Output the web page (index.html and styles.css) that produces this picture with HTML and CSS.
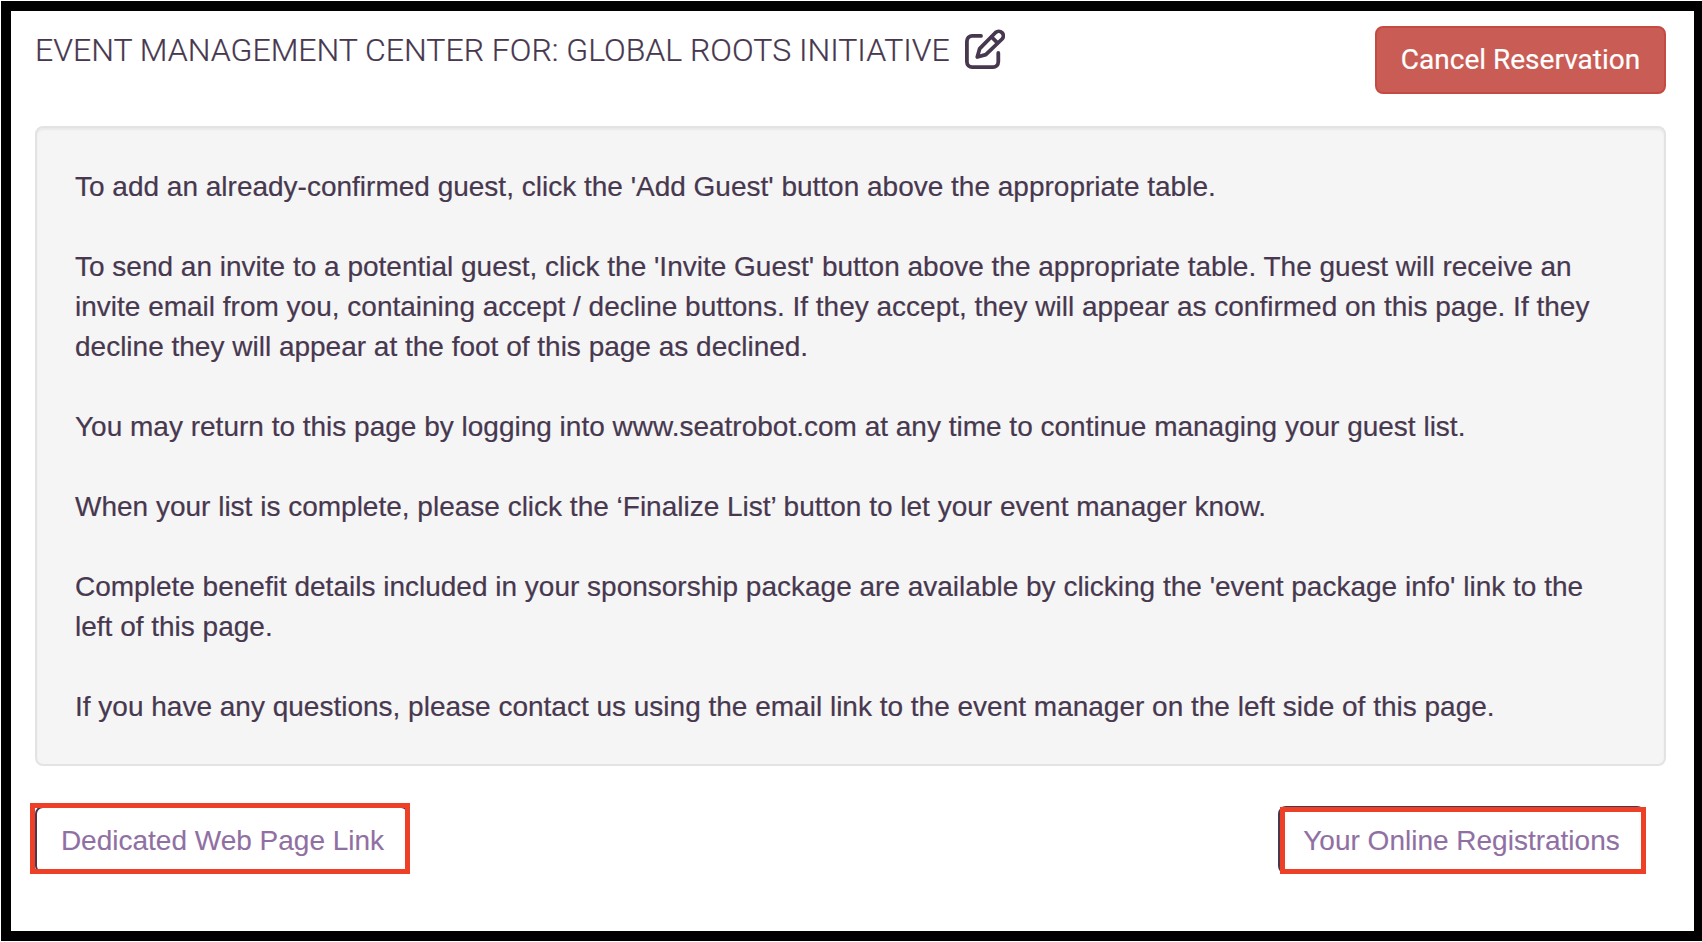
FILE: index.html
```html
<!DOCTYPE html>
<html lang="en">
  <head>
    <meta charset="UTF-8" />
    <meta name="viewport" content="width=device-width, initial-scale=1.0" />
    <title>Event Management Center</title>
    <link rel="stylesheet" href="styles.css">
  </head>
  <body>
    <div class="container">
      <!-- Page heading and cancel button -->
      <div class="header">
        <h2 class="title">
          <span class="title-text">EVENT MANAGEMENT CENTER FOR: GLOBAL ROOTS INITIATIVE</span>
          <svg class="edit-icon" viewBox="0 0 40 40" fill="none" stroke="currentColor" stroke-width="3.8" stroke-linecap="round" stroke-linejoin="round">
            <path d="M16 6.9H7.2A5.3 5.3 0 0 0 1.9 12.2V32.8A5.3 5.3 0 0 0 7.2 38.1H28A5.3 5.3 0 0 0 33.3 32.8V24" />
            <path d="M12.3 28L14.7 19.6L30.6 3.5A4.6 4.6 0 0 1 37.1 10L20.8 25.6Z" />
            <path d="M26.6 8L32.2 13.6" />
          </svg>
        </h2>
        <button type="button" class="btn-cancel">Cancel Reservation</button>
      </div>

      <!-- Instructions -->
      <div class="well">
        <p>To add an already-confirmed guest, click the 'Add Guest' button above the appropriate table.</p>
        <p>To send an invite to a potential guest, click the 'Invite Guest' button above the appropriate table. The guest will receive an invite email from you, containing accept / decline buttons. If they accept, they will appear as confirmed on this page. If they decline they will appear at the foot of this page as declined.</p>
        <p>You may return to this page by logging into www.seatrobot.com at any time to continue managing your guest list.</p>
        <p>When your list is complete, please click the ‘Finalize List’ button to let your event manager know.</p>
        <p>Complete benefit details included in your sponsorship package are available by clicking the 'event package info' link to the left of this page.</p>
        <p>If you have any questions, please contact us using the email link to the event manager on the left side of this page.</p>
      </div>

      <!-- Bottom links -->
      <div class="links">
        <a class="btn-link btn-page">Dedicated Web Page Link</a>
        <a class="btn-link btn-registrations">Your Online Registrations</a>
      </div>
    </div>
  </body>
</html>
```

FILE: styles.css
```css
* {
  box-sizing: border-box;
}

body {
  margin: 0;
  padding: 1px 0 1px 1px;
  height: 942px;
  overflow: hidden;
  background: white;
  color: #47384f;
  font-family: "Liberation Sans", Arial, sans-serif;
  font-size: 28px;
}

/* Black frame around the whole page */
.container {
  height: 940px;
  padding: 15px 28px 0 24px;
  border: 10px solid black;
  border-right-width: 8px;
}

.header {
  display: flex;
  justify-content: space-between;
  align-items: flex-start;
  height: 100px;
}

.title {
  display: flex;
  align-items: flex-start;
  gap: 15px;
  margin: 3px 0 0;
  font-family: Roboto, sans-serif;
  font-size: 32px;
  font-weight: 300;
  line-height: 40px;
  white-space: nowrap;
}

.title-text {
  padding-top: 1px;
  -webkit-text-stroke: 0.2px;
}

.edit-icon {
  width: 40px;
  height: 40px;
}

.btn-cancel {
  width: 291px;
  height: 68px;
  padding: 0 0 2px;
  border: 2px solid #c54a42;
  border-radius: 8px;
  background: #c95c54;
  color: white;
  font-family: Roboto, sans-serif;
  font-size: 28px;
  white-space: nowrap;
  -webkit-text-stroke: 0.2px;
}

/* Instructions box */
.well {
  height: 640px;
  padding: 39px 38px 37px;
  border: 2px solid #e3e3e3;
  border-radius: 8px;
  background: #f5f5f5;
  box-shadow: inset 0 2px 2px rgba(0, 0, 0, 0.05);
  line-height: 40px;
  -webkit-text-stroke: 0.2px;
}

.well p {
  margin: 0 0 40px;
}

.links {
  display: flex;
  justify-content: space-between;
  margin-top: 40px;
  padding-right: 21px;
}

.btn-link {
  position: relative;
  height: 68px;
  border: 2px solid #47384f;
  border-radius: 8px;
  color: #9070a3;
  line-height: 66px;
  text-align: center;
  white-space: nowrap;
  -webkit-text-stroke: 0.1px;
}

.btn-page {
  width: 374px;
  padding-left: 1px;
}

.btn-registrations {
  width: 367px;
}

/* Red highlight drawn over each link */
.btn-link::after {
  content: "";
  position: absolute;
  border: 5px solid #ee4026;
}

.btn-page::after {
  inset: -5px -3px -2px -7px;
}

.btn-registrations::after {
  inset: -1px -3px -2px 0;
}
```
